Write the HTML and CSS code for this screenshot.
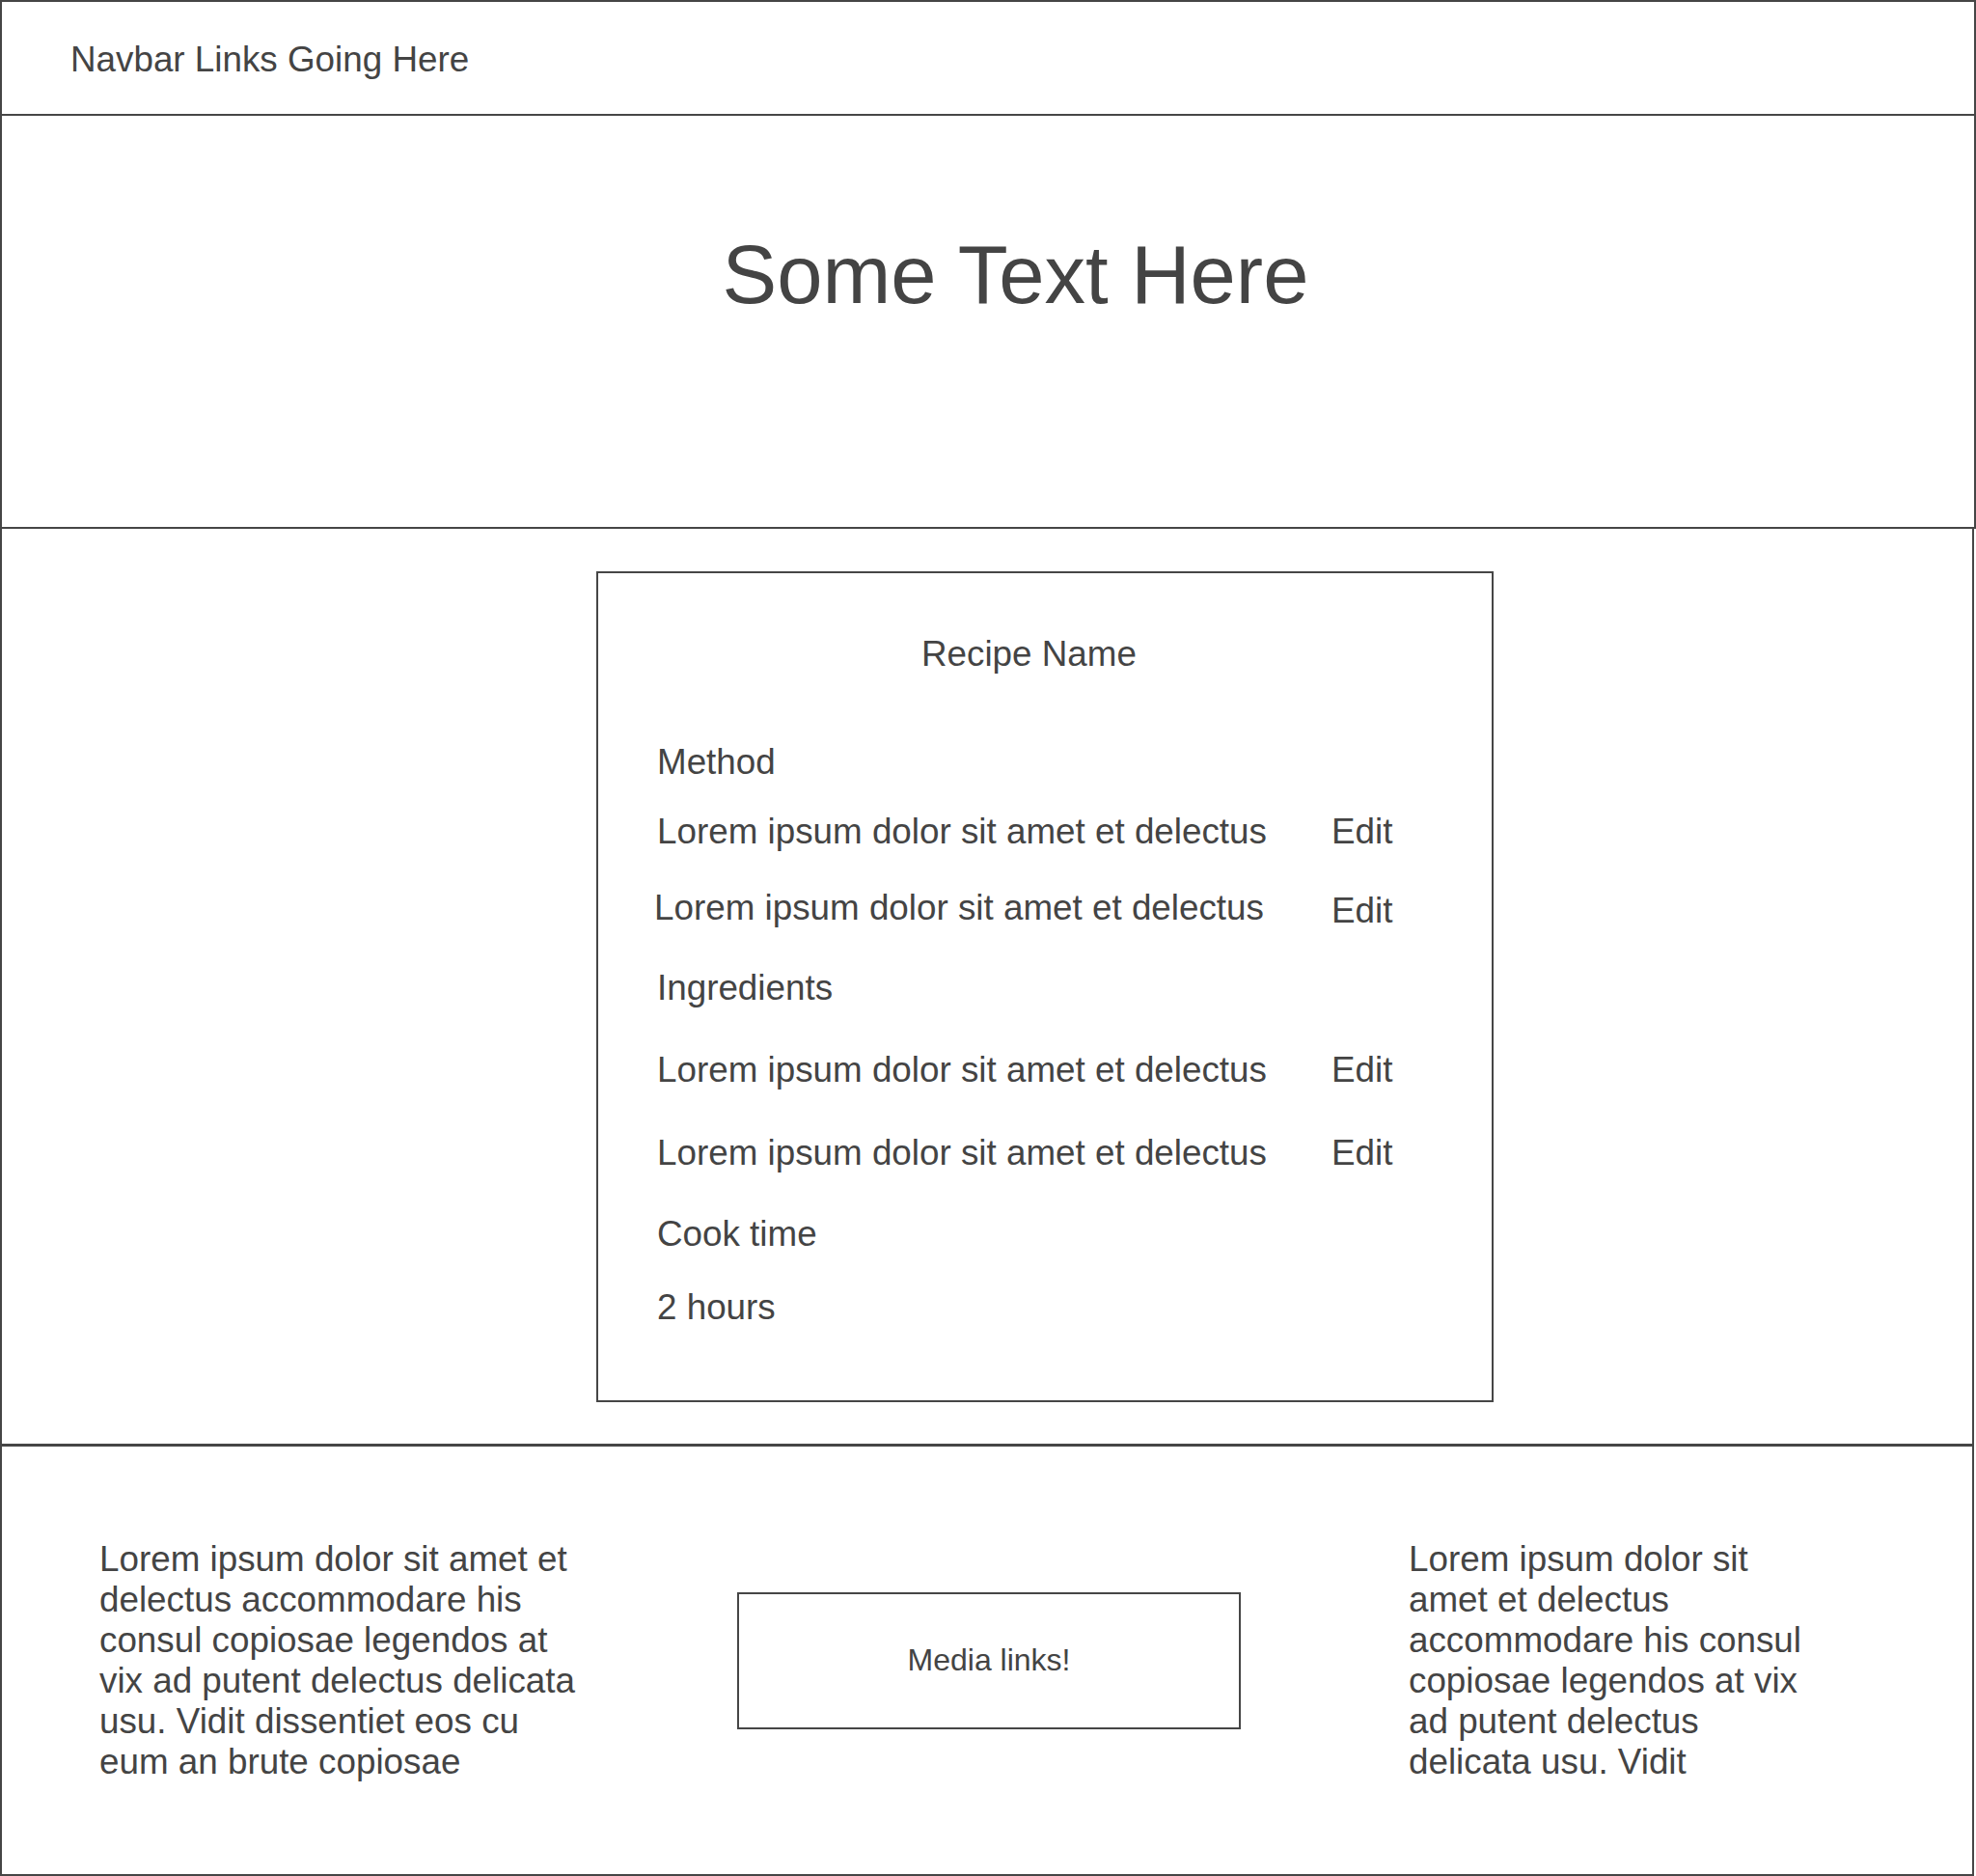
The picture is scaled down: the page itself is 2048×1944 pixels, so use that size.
FILE: index.html
```html
<!DOCTYPE html>
<html lang="en">
<head>
<meta charset="utf-8">
<title>Recipe wireframe</title>
<link rel="stylesheet" href="styles.css">
</head>
<body>
<div class="page">
  <nav class="navbar">Navbar Links Going Here</nav>

  <header class="hero">
    <h1 class="hero-title">Some Text Here</h1>
  </header>

  <main class="recipe-section">
    <section class="card">
      <h2 class="recipe-name">Recipe Name</h2>

      <div class="label sp-method">Method</div>
      <div class="row sp-30">
        <span class="row-text">Lorem ipsum dolor sit amet et delectus</span>
        <span class="edit">Edit</span>
      </div>
      <div class="row sp-37">
        <span class="row-text nudge">Lorem ipsum dolor sit amet et delectus</span>
        <span class="edit low">Edit</span>
      </div>

      <div class="label sp-38">Ingredients</div>
      <div class="row sp-43">
        <span class="row-text">Lorem ipsum dolor sit amet et delectus</span>
        <span class="edit">Edit</span>
      </div>
      <div class="row sp-44">
        <span class="row-text">Lorem ipsum dolor sit amet et delectus</span>
        <span class="edit">Edit</span>
      </div>

      <div class="label sp-42">Cook time</div>
      <div class="label sp-34">2 hours</div>
    </section>
  </main>

  <footer class="footer">
    <p class="foot-text foot-left">Lorem ipsum dolor sit amet et delectus accommodare his consul copiosae legendos at vix ad putent delectus delicata usu. Vidit dissentiet eos cu eum an brute copiosae</p>
    <div class="media-box">Media links!</div>
    <p class="foot-text foot-right">Lorem ipsum dolor sit amet et delectus accommodare his consul copiosae legendos at vix ad putent delectus delicata usu. Vidit</p>
  </footer>
</div>
</body>
</html>
```

FILE: styles.css
```css
* {
  box-sizing: border-box;
}

html, body {
  margin: 0;
  padding: 0;
  background: #ffffff;
}

body {
  font-family: "Liberation Sans", Arial, Helvetica, sans-serif;
  color: #444444;
}

.page {
  width: 2048px;
}

/* Navbar */
.navbar {
  height: 120px;
  border: 2px solid #464646;
  padding: 39px 0 0 71px;
  font-size: 36.8px;
  line-height: 42px;
}

/* Hero */
.hero {
  height: 428px;
  border-left: 2px solid #464646;
  border-right: 2px solid #464646;
  border-bottom: 2px solid #464646;
  padding: 117px 0 0 57px;
}

.hero-title {
  margin: 0;
  font-weight: normal;
  font-size: 85px;
  line-height: 96px;
  text-align: center;
}

/* Recipe section */
.recipe-section {
  width: 2046px;
  border-left: 2px solid #464646;
  border-right: 2px solid #464646;
  border-bottom: 3px solid #464646;
  padding: 44px 0 43px;
}

.card {
  width: 930px;
  height: 861px;
  margin-left: 616px;
  border: 2px solid #464646;
  padding: 63px 0 0 61px;
  font-size: 36.8px;
  line-height: 42px;
}

.recipe-name {
  margin: 0 0 0 274px;
  font-size: 36.8px;
  font-weight: normal;
  line-height: 42px;
}

.label {
  white-space: nowrap;
}

.row {
  display: flex;
  align-items: flex-start;
  white-space: nowrap;
}

.row-text {
  flex: 0 0 699px;
}

.row-text.nudge {
  flex-basis: 702px;
  margin-left: -3px;
}

.edit {
  flex: none;
}

.edit.low {
  padding-top: 3px;
}

.sp-method { margin-top: 70px; }
.sp-30 { margin-top: 30px; }
.sp-34 { margin-top: 34px; }
.sp-37 { margin-top: 37px; }
.sp-38 { margin-top: 38px; }
.sp-42 { margin-top: 42px; }
.sp-43 { margin-top: 43px; }
.sp-44 { margin-top: 44px; }

/* Footer */
.footer {
  width: 2046px;
  height: 445px;
  border-left: 2px solid #464646;
  border-right: 2px solid #464646;
  border-bottom: 2px solid #464646;
  display: flex;
  align-items: center;
  padding-left: 101px;
}

.foot-text {
  margin: 0;
  font-size: 36.8px;
  line-height: 42px;
}

.foot-left {
  width: 505px;
}

.media-box {
  width: 522px;
  height: 142px;
  margin-left: 156px;
  border: 2px solid #464646;
  display: flex;
  align-items: center;
  justify-content: center;
  font-size: 32px;
}

.foot-right {
  width: 420px;
  margin-left: 174px;
}
```
